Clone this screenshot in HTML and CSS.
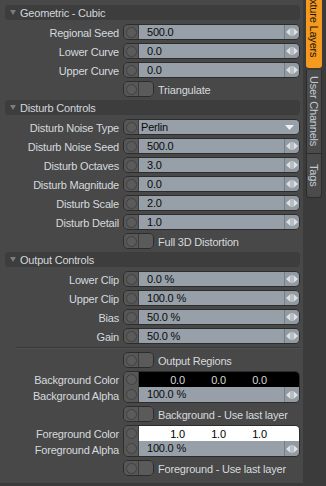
FILE: index.html
```html
<!DOCTYPE html>
<html>
<head>
<meta charset="utf-8">
<link rel="stylesheet" href="styles.css">
</head>
<body>
<div class="app">
  <div class="panel">
    <div class="hdr"><svg class="tri" width="6" height="5" viewBox="0 0 6 5"><path d="M0 0H6L3 5Z" fill="#7c7c7c"/></svg><span>Geometric - Cubic</span></div>
    <div class="row"><div class="lbl">Regional Seed</div><div class="field"><div class="knob"><div class="dot"></div></div><div class="val">500.0</div><div class="spin"><svg width="12" height="8" viewBox="0 0 12 8"><path d="M0 4L4.5 0V8Z M7.5 0L12 4L7.5 8Z" fill="#dde1e5"/><rect x="5.5" y="0" width="1" height="8" fill="#dde1e5"/></svg></div></div></div>
    <div class="row"><div class="lbl">Lower Curve</div><div class="field"><div class="knob"><div class="dot"></div></div><div class="val">0.0</div><div class="spin"><svg width="12" height="8" viewBox="0 0 12 8"><path d="M0 4L4.5 0V8Z M7.5 0L12 4L7.5 8Z" fill="#dde1e5"/><rect x="5.5" y="0" width="1" height="8" fill="#dde1e5"/></svg></div></div></div>
    <div class="row"><div class="lbl">Upper Curve</div><div class="field"><div class="knob"><div class="dot"></div></div><div class="val">0.0</div><div class="spin"><svg width="12" height="8" viewBox="0 0 12 8"><path d="M0 4L4.5 0V8Z M7.5 0L12 4L7.5 8Z" fill="#dde1e5"/><rect x="5.5" y="0" width="1" height="8" fill="#dde1e5"/></svg></div></div></div>
    <div class="row"><div class="lbl"></div><div class="tog"><div class="knob"><div class="dot"></div></div><div class="tog-r"></div></div><div class="tog-lbl">Triangulate</div></div>

    <div class="hdr"><svg class="tri" width="6" height="5" viewBox="0 0 6 5"><path d="M0 0H6L3 5Z" fill="#7c7c7c"/></svg><span>Disturb Controls</span></div>
    <div class="row"><div class="lbl">Disturb Noise Type</div><div class="field"><div class="knob"><div class="dot"></div></div><div class="val drop"><span>Perlin</span><svg width="9" height="5" viewBox="0 0 9 5"><path d="M0 0H9L4.5 5Z" fill="#eef0f2"/></svg></div></div></div>
    <div class="row"><div class="lbl">Disturb Noise Seed</div><div class="field"><div class="knob"><div class="dot"></div></div><div class="val">500.0</div><div class="spin"><svg width="12" height="8" viewBox="0 0 12 8"><path d="M0 4L4.5 0V8Z M7.5 0L12 4L7.5 8Z" fill="#dde1e5"/><rect x="5.5" y="0" width="1" height="8" fill="#dde1e5"/></svg></div></div></div>
    <div class="row"><div class="lbl">Disturb Octaves</div><div class="field"><div class="knob"><div class="dot"></div></div><div class="val">3.0</div><div class="spin"><svg width="12" height="8" viewBox="0 0 12 8"><path d="M0 4L4.5 0V8Z M7.5 0L12 4L7.5 8Z" fill="#dde1e5"/><rect x="5.5" y="0" width="1" height="8" fill="#dde1e5"/></svg></div></div></div>
    <div class="row"><div class="lbl">Disturb Magnitude</div><div class="field"><div class="knob"><div class="dot"></div></div><div class="val">0.0</div><div class="spin"><svg width="12" height="8" viewBox="0 0 12 8"><path d="M0 4L4.5 0V8Z M7.5 0L12 4L7.5 8Z" fill="#dde1e5"/><rect x="5.5" y="0" width="1" height="8" fill="#dde1e5"/></svg></div></div></div>
    <div class="row"><div class="lbl">Disturb Scale</div><div class="field"><div class="knob"><div class="dot"></div></div><div class="val">2.0</div><div class="spin"><svg width="12" height="8" viewBox="0 0 12 8"><path d="M0 4L4.5 0V8Z M7.5 0L12 4L7.5 8Z" fill="#dde1e5"/><rect x="5.5" y="0" width="1" height="8" fill="#dde1e5"/></svg></div></div></div>
    <div class="row"><div class="lbl">Disturb Detail</div><div class="field"><div class="knob"><div class="dot"></div></div><div class="val">1.0</div><div class="spin"><svg width="12" height="8" viewBox="0 0 12 8"><path d="M0 4L4.5 0V8Z M7.5 0L12 4L7.5 8Z" fill="#dde1e5"/><rect x="5.5" y="0" width="1" height="8" fill="#dde1e5"/></svg></div></div></div>
    <div class="row"><div class="lbl"></div><div class="tog"><div class="knob"><div class="dot"></div></div><div class="tog-r"></div></div><div class="tog-lbl">Full 3D Distortion</div></div>

    <div class="hdr"><svg class="tri" width="6" height="5" viewBox="0 0 6 5"><path d="M0 0H6L3 5Z" fill="#7c7c7c"/></svg><span>Output Controls</span></div>
    <div class="row"><div class="lbl">Lower Clip</div><div class="field"><div class="knob"><div class="dot"></div></div><div class="val">0.0 %</div><div class="spin"><svg width="12" height="8" viewBox="0 0 12 8"><path d="M0 4L4.5 0V8Z M7.5 0L12 4L7.5 8Z" fill="#dde1e5"/><rect x="5.5" y="0" width="1" height="8" fill="#dde1e5"/></svg></div></div></div>
    <div class="row"><div class="lbl">Upper Clip</div><div class="field"><div class="knob"><div class="dot"></div></div><div class="val">100.0 %</div><div class="spin"><svg width="12" height="8" viewBox="0 0 12 8"><path d="M0 4L4.5 0V8Z M7.5 0L12 4L7.5 8Z" fill="#dde1e5"/><rect x="5.5" y="0" width="1" height="8" fill="#dde1e5"/></svg></div></div></div>
    <div class="row"><div class="lbl">Bias</div><div class="field"><div class="knob"><div class="dot"></div></div><div class="val">50.0 %</div><div class="spin"><svg width="12" height="8" viewBox="0 0 12 8"><path d="M0 4L4.5 0V8Z M7.5 0L12 4L7.5 8Z" fill="#dde1e5"/><rect x="5.5" y="0" width="1" height="8" fill="#dde1e5"/></svg></div></div></div>
    <div class="row"><div class="lbl">Gain</div><div class="field"><div class="knob"><div class="dot"></div></div><div class="val">50.0 %</div><div class="spin"><svg width="12" height="8" viewBox="0 0 12 8"><path d="M0 4L4.5 0V8Z M7.5 0L12 4L7.5 8Z" fill="#dde1e5"/><rect x="5.5" y="0" width="1" height="8" fill="#dde1e5"/></svg></div></div></div>
    <div class="sep"></div>
    <div class="row"><div class="lbl"></div><div class="tog"><div class="knob"><div class="dot"></div></div><div class="tog-r"></div></div><div class="tog-lbl">Output Regions</div></div>

    <div class="crow">
      <div class="clbls"><div>Background Color</div><div>Background Alpha</div></div>
      <div class="cfield">
        <div class="cknob"><div class="ccell"><div class="dot"></div></div><div class="ccell"><div class="dot"></div></div></div>
        <div class="cright">
          <div class="swatch black"><span>0.0</span><span>0.0</span><span>0.0</span></div>
          <div class="alpha"><div class="val">100.0 %</div><div class="spin"><svg width="12" height="8" viewBox="0 0 12 8"><path d="M0 4L4.5 0V8Z M7.5 0L12 4L7.5 8Z" fill="#dde1e5"/><rect x="5.5" y="0" width="1" height="8" fill="#dde1e5"/></svg></div></div>
        </div>
      </div>
    </div>
    <div class="row"><div class="lbl"></div><div class="tog"><div class="knob"><div class="dot"></div></div><div class="tog-r"></div></div><div class="tog-lbl">Background - Use last layer</div></div>

    <div class="crow">
      <div class="clbls"><div>Foreground Color</div><div>Foreground Alpha</div></div>
      <div class="cfield">
        <div class="cknob"><div class="ccell"><div class="dot"></div></div><div class="ccell"><div class="dot"></div></div></div>
        <div class="cright">
          <div class="swatch white"><span>1.0</span><span>1.0</span><span>1.0</span></div>
          <div class="alpha"><div class="val">100.0 %</div><div class="spin"><svg width="12" height="8" viewBox="0 0 12 8"><path d="M0 4L4.5 0V8Z M7.5 0L12 4L7.5 8Z" fill="#dde1e5"/><rect x="5.5" y="0" width="1" height="8" fill="#dde1e5"/></svg></div></div>
        </div>
      </div>
    </div>
    <div class="row"><div class="lbl"></div><div class="tog"><div class="knob"><div class="dot"></div></div><div class="tog-r"></div></div><div class="tog-lbl">Foreground - Use last layer</div></div>
  </div>

  <div class="tabs">
    <div class="tab active"><span>Texture Layers</span></div>
    <div class="tabgroup">
      <div class="tab user"><span>User Channels</span></div>
      <div class="tab tags"><span>Tags</span></div>
    </div>
  </div>
</div>
</body>
</html>
```

FILE: styles.css
```css
* { box-sizing: border-box; }

body {
  margin: 0;
  background: #3a3a3a;
  font-family: "Liberation Sans", Arial, sans-serif;
  font-size: 11px;
  letter-spacing: -0.2px;
}

.app {
  display: flex;
  width: 326px;
  height: 486px;
  overflow: hidden;
}

.panel {
  width: 303px;
  height: 483px;
  background: #484848;
  padding: 5px 3px 0 5px;
  flex: none;
}

.hdr {
  height: 15px;
  background: #3d3d3d;
  border-radius: 4px;
  display: flex;
  align-items: center;
  color: #d3d7db;
  margin-bottom: 4px;
  line-height: 16px;
}

.hdr .tri {
  margin: 0 4px 0 5px;
}

.row {
  display: flex;
  height: 16px;
  margin-bottom: 3px;
}

.row + .hdr { margin-top: 1px; }

.lbl {
  width: 114px;
  margin-right: 4px;
  text-align: right;
  color: #d6dade;
  line-height: 18px;
  white-space: nowrap;
  flex: none;
}

.field {
  flex: 1;
  display: flex;
  border: 1px solid #2c2c2c;
  border-radius: 5px;
  overflow: hidden;
}

.knob {
  width: 15px;
  flex: none;
  background: #575757;
  border-right: 1px solid #3c3c3c;
  display: flex;
  align-items: center;
  justify-content: center;
}

.dot {
  width: 11px;
  height: 11px;
  border-radius: 50%;
  border: 1px solid #424242;
  background: #5b5b5b;
}

.val {
  flex: 1;
  background: #97a0a8;
  color: #0a0a0a;
  padding-left: 8px;
  line-height: 15px;
  white-space: nowrap;
}

.val.drop {
  padding-left: 2px;
  padding-right: 5px;
  display: flex;
  align-items: center;
  justify-content: space-between;
}

.spin {
  width: 15px;
  flex: none;
  background: #929aa2;
  border-left: 1px solid #767d85;
  display: flex;
  align-items: center;
  justify-content: center;
}

.tog {
  width: 31px;
  flex: none;
  display: flex;
  border: 1px solid #2c2c2c;
  border-radius: 5px;
  overflow: hidden;
}

.tog-r {
  flex: 1;
  background: #5a5a5a;
}

.tog-lbl {
  margin-left: 4px;
  color: #d6dade;
  line-height: 18px;
  white-space: nowrap;
}

.sep {
  height: 2px;
  margin: 3px 0 3px 11px;
  border-top: 1px solid #393939;
  border-bottom: 1px solid #515151;
}

.crow {
  display: flex;
  height: 32px;
  margin-bottom: 3px;
}

.clbls {
  width: 114px;
  margin-right: 4px;
  flex: none;
  display: flex;
  flex-direction: column;
  text-align: right;
  color: #d6dade;
  white-space: nowrap;
}

.clbls div {
  height: 16px;
  line-height: 18px;
}

.cfield {
  flex: 1;
  display: flex;
  border: 1px solid #2c2c2c;
  border-radius: 5px;
  overflow: hidden;
}

.cknob {
  width: 15px;
  flex: none;
  background: #575757;
  border-right: 1px solid #3c3c3c;
  display: flex;
  flex-direction: column;
}

.ccell {
  flex: 1;
  display: flex;
  align-items: center;
  justify-content: center;
}

.cright {
  flex: 1;
  display: flex;
  flex-direction: column;
}

.swatch {
  height: 15px;
  display: flex;
  padding-left: 18px;
  line-height: 16px;
}

.swatch span {
  width: 41px;
  text-align: center;
}

.swatch.black { background: #000; color: #d8d8d8; }
.swatch.white { background: #fff; color: #000; }

.alpha {
  flex: 1;
  display: flex;
}

.alpha .val { line-height: 15px; }

.tabs {
  flex: 1;
  background: #3b3b3b;
  padding: 0 4px 0 3px;
  display: flex;
  flex-direction: column;
  gap: 2px;
  overflow: hidden;
}

.tab {
  width: 16px;
  display: flex;
  align-items: center;
  justify-content: center;
  flex: none;
}

.tab span {
  writing-mode: vertical-rl;
  white-space: nowrap;
  line-height: 16px;
}

.tab.active {
  height: 91px;
  margin-top: -23px;
  background: #f39a1f;
  color: #1c1408;
  border-radius: 0 0 3px 3px;
}

.tabgroup {
  width: 16px;
  background: #4b4b4b;
  border: 1px solid #2c2c2c;
  border-top: none;
  border-radius: 0 0 4px 4px;
}

.tab.user {
  width: 14px;
  height: 84px;
  border-bottom: 1px solid #2c2c2c;
  color: #c3ccd6;
}

.tab.tags {
  width: 14px;
  height: 43px;
  color: #c3ccd6;
}
```
